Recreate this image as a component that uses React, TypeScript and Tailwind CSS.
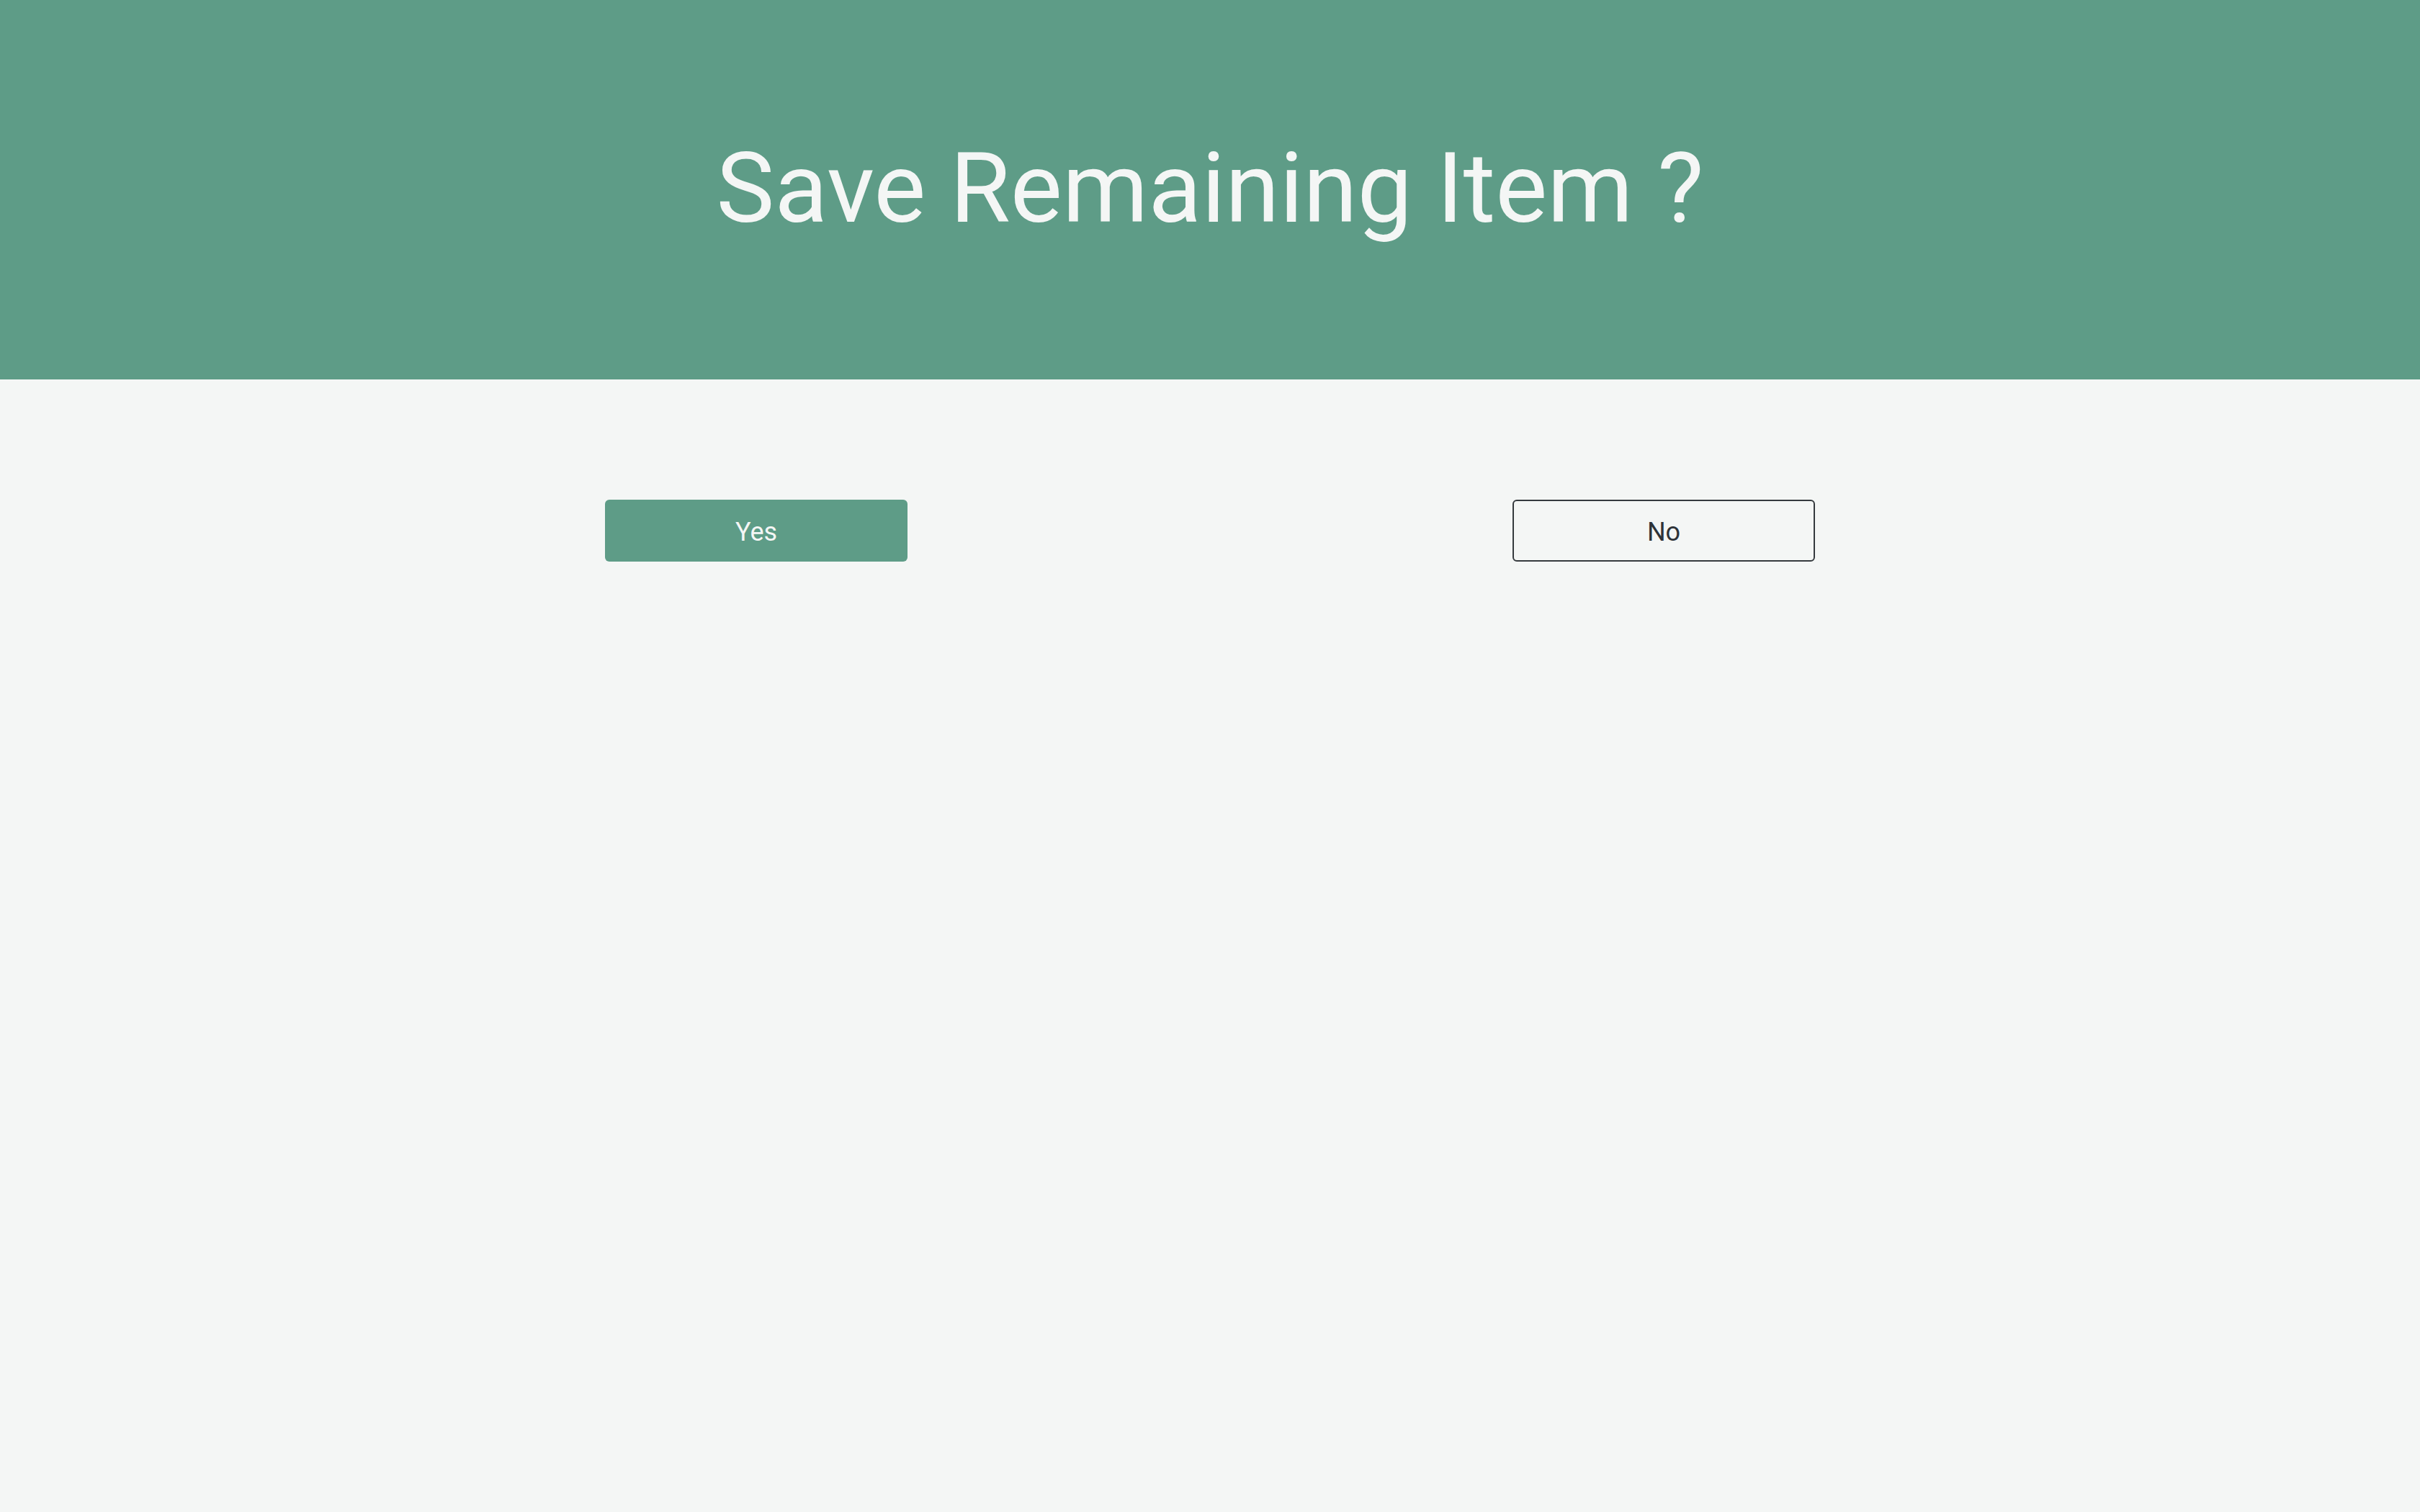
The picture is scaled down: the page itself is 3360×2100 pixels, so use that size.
export default function App() {
  return (
    <div className="w-[3360px] h-[2100px] bg-[#f4f6f5] flex flex-col" style={{ fontFamily: "Roboto, 'Noto Sans', sans-serif" }}>
      <div className="h-[527px] bg-[#5e9c87] flex justify-center pt-[194px] shrink-0">
        <h1 className="text-[136px] leading-none font-normal text-[#f4f6f5]">Save Remaining Item ?</h1>
      </div>
      <div className="flex justify-evenly pt-[167px]">
        <button className="w-[420px] h-[86px] rounded-[6px] bg-[#5e9c87] text-[#f4f6f5] text-[36px] leading-none flex items-center justify-center pt-[3px]">
          Yes
        </button>
        <button className="w-[420px] h-[86px] rounded-[6px] border-2 border-[#353a3e] text-[#2e3338] text-[36px] leading-none flex items-center justify-center pt-[3px]">
          No
        </button>
      </div>
    </div>
  );
}
